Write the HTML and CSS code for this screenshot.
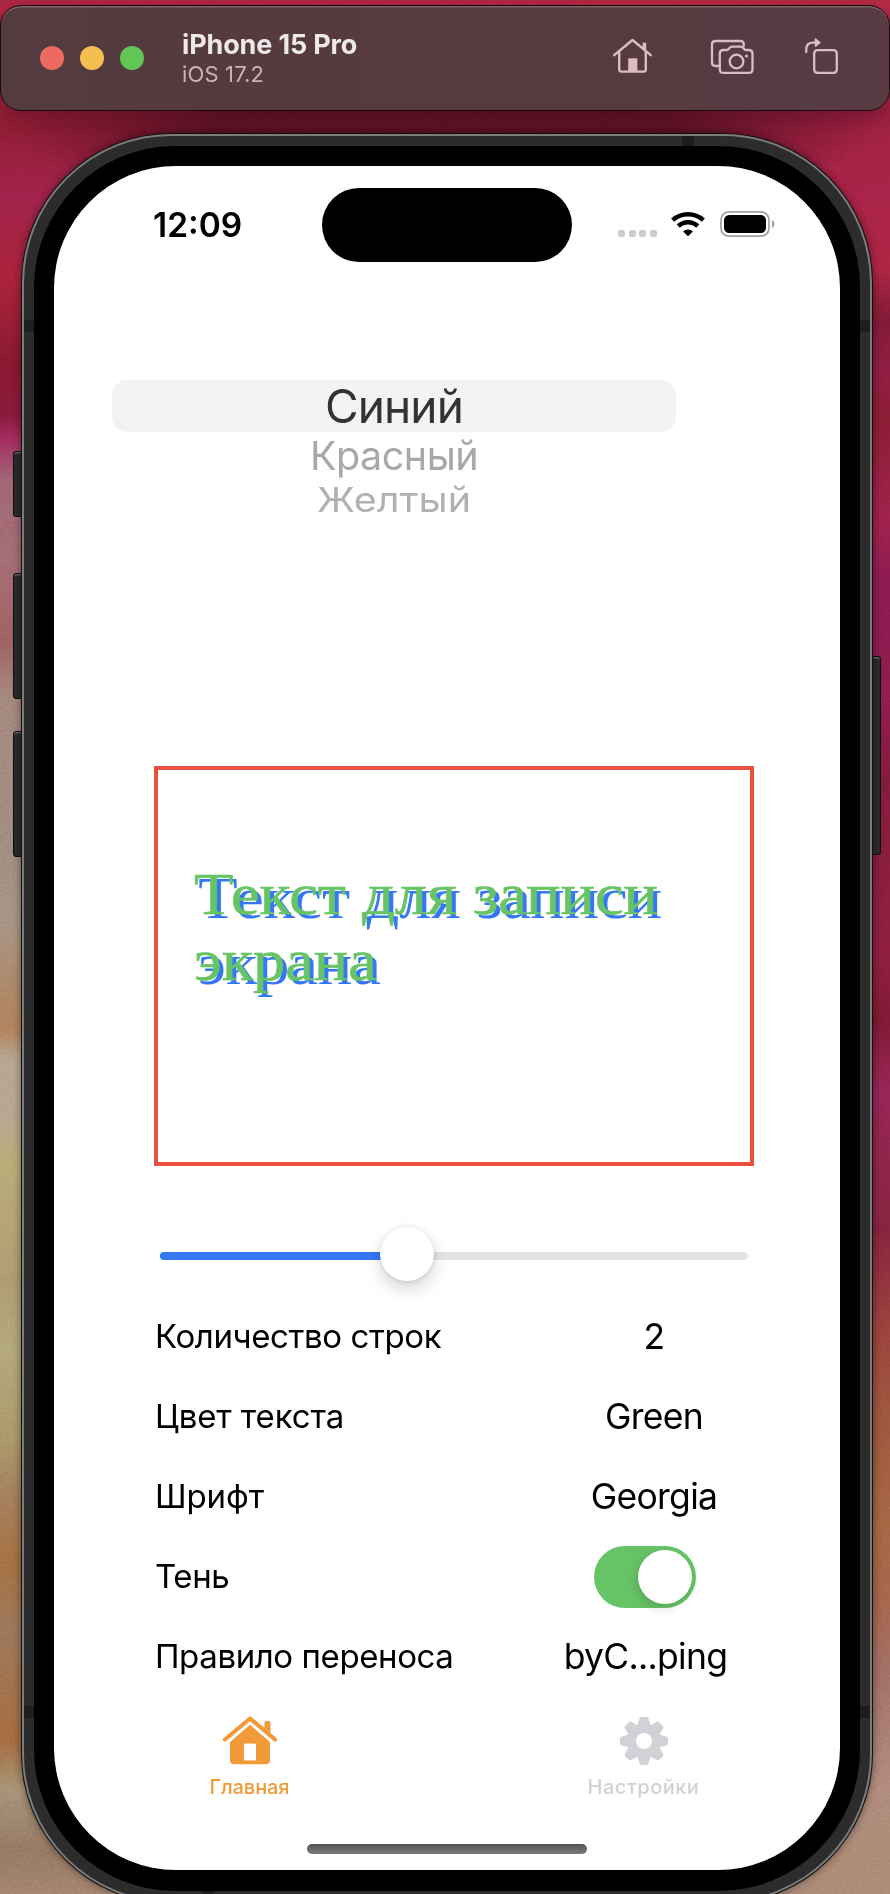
FILE: index.html
```html
<!DOCTYPE html>
<html lang="ru">
<head>
<meta charset="utf-8">
<title>iPhone 15 Pro</title>
<link rel="stylesheet" href="styles.css">
</head>
<body>
<div class="desktop">
  <svg class="grain" width="890" height="1894" aria-hidden="true">
    <filter id="noise"><feTurbulence type="fractalNoise" baseFrequency="0.4" numOctaves="2" seed="4"/><feColorMatrix type="saturate" values="0"/></filter>
    <rect width="890" height="1894" filter="url(#noise)"/>
  </svg>
  <header class="toolbar">
    <div class="lights"><i class="light close"></i><i class="light minimize"></i><i class="light expand"></i></div>
    <div class="titles">
      <div class="title"><span>iPhone 15 Pro</span></div>
      <div class="subtitle"><span>iOS 17.2</span></div>
    </div>
    <div class="tools">
      <svg width="41" height="38" viewBox="0 0 41 38" fill="none" stroke="currentColor" stroke-width="2.4" stroke-linecap="round" stroke-linejoin="round">
        <path d="M2.2 18.2 20.5 3 38.8 18.2"/><path d="M7.2 15v17.2q0 2.4 2.4 2.4h21.8q2.4 0 2.4-2.4V15"/><path d="M32.4 11.5V7.500" stroke-width="3.6" stroke-linecap="square"/><path d="M17 22h7.6v12H17z" fill="currentColor" stroke-width="1.6"/>
      </svg>
      <svg class="camera" width="44" height="38" viewBox="0 0 44 38" fill="none" stroke="currentColor" stroke-width="2.3" stroke-linecap="round" stroke-linejoin="round">
        <path d="M8.5 28H5.5Q2 28 2 24.500V6.500Q2 3 5.500 3h24.800q3.500 0 3.500 3.500v1.400"/>
        <path d="M13.500 12h3.200q1 0 1.700-.8l1.500-1.700q1-.9 2.300-.9h8.400q1.300 0 2.200.9l1.600 1.700q.7.800 1.700.800h2.600q3.800 0 3.800 3.700v15.500q0 3.700-3.800 3.700H13.500q-3.700 0-3.700-3.700V15.700q0-3.700 3.700-3.700z"/>
        <circle cx="26.500" cy="23.500" r="6.800"/><circle cx="36.500" cy="18" r="1.600" fill="currentColor" stroke="none"/>
      </svg>
      <svg width="36" height="40" viewBox="0 0 36 40" fill="none" stroke="currentColor" stroke-width="2.3" stroke-linecap="round" stroke-linejoin="round">
        <rect x="10.200" y="14.200" width="22.600" height="22.600" rx="3.200"/><path d="M2.200 16v-2.500Q2.200 6.600 9.200 6.600h3"/><path d="M11.500 3.200v6.800l4.300-3.400z" fill="currentColor" stroke-width="1.600"/>
      </svg>
    </div>
  </header>

  <div class="phone">
    <i class="side action"></i><i class="side up"></i><i class="side down"></i><i class="side power"></i>
    <div class="rim"><div class="frame">
      <i class="band lt"></i><i class="band rt"></i><i class="band lb"></i><i class="band rb"></i><i class="band tp"></i><i class="band bt"></i>
      <div class="bezel"><main class="screen">
        <div class="status">
          <div class="time"><span>12:09</span></div>
          <div class="island"></div>
          <div class="signals">
            <span class="dots"><i></i><i></i><i></i><i></i></span>
            <svg class="wifi" width="34" height="26" viewBox="0 0 34 26" fill="none" stroke="#000" stroke-width="4.500">
              <path d="M1.600 9.200Q8.200 3.250 17 3.250T32.400 9.200"/><path d="M7.300 15.200Q11.300 11.300 17 11.300T26.700 15.200"/><path d="M17 25.300l-4.900-4.700Q14.200 18.500 17 18.500t4.900 2.100z" fill="#000" stroke="none"/>
            </svg>
            <svg width="56" height="28" viewBox="0 0 56 28">
              <rect x="1" y="1.800" width="48" height="24.400" rx="8" fill="none" stroke="#a0a0a0" stroke-width="1.700"/><rect x="4" y="5" width="42" height="18" rx="5.200"/><path d="M52 10q2.600 1.200 2.600 4T52 18z" fill="#a0a0a0"/>
            </svg>
          </div>
        </div>
        <div class="picker">
          <div class="choice selected"><span>Синий</span></div>
          <div class="choice near"><span>Красный</span></div>
          <div class="choice far"><span>Желтый</span></div>
        </div>
        <section class="preview"><p><span class="l1">Текст для записи</span><br><span class="l2">экрана</span></p></section>
        <div class="slider"><div class="track"><div class="fill"></div></div><div class="thumb"></div></div>
        <div class="rows">
          <div class="row"><div class="name tight"><span>Количество строк</span></div><div class="value"><span>2</span></div></div>
          <div class="row"><div class="name"><span>Цвет текста</span></div><div class="value"><span>Green</span></div></div>
          <div class="row"><div class="name"><span>Шрифт</span></div><div class="value"><span>Georgia</span></div></div>
          <div class="row"><div class="name tight"><span>Тень</span></div><div class="value"><div class="switch"><div class="knob"></div></div></div></div>
          <div class="row"><div class="name tight"><span>Правило переноса</span></div><div class="value rule"><span>byC...ping</span></div></div>
        </div>
        <nav class="tabs">
          <div class="tab active">
            <svg width="56" height="52" viewBox="0 0 56 52" fill="currentColor">
              <path d="M3 24.500 28 3.500 53 24.500" fill="none" stroke="currentColor" stroke-width="4.200" stroke-linecap="round" stroke-linejoin="round"/>
              <path d="M42.500 13V7.500q0-1.500 1.500-1.500h3q1.500 0 1.500 1.500V19z"/>
              <path fill-rule="evenodd" d="M28 9.800 48 27v18q0 4.200-4.200 4.200H12.200Q8 49.200 8 45V27zM23.500 28.500q-1.500 0-1.500 1.500v14q0 1.500 1.500 1.500h9q1.500 0 1.500-1.500V30q0-1.500-1.500-1.500z"/>
            </svg>
            <span>Главная</span>
          </div>
          <div class="tab">
            <svg width="52" height="52" viewBox="-26 -26 52 52" fill="currentColor">
              <defs><path id="tooth" d="M-6.600-15l2-7.300Q-4.200-24-2.400-24h4.800q1.800 0 2.200 1.700l2 7.300z"/></defs>
              <use href="#tooth"/><use href="#tooth" transform="rotate(45)"/><use href="#tooth" transform="rotate(90)"/><use href="#tooth" transform="rotate(135)"/><use href="#tooth" transform="rotate(180)"/><use href="#tooth" transform="rotate(225)"/><use href="#tooth" transform="rotate(270)"/><use href="#tooth" transform="rotate(315)"/>
              <circle r="12.600" fill="none" stroke="currentColor" stroke-width="9.200"/>
            </svg>
            <span>Настройки</span>
          </div>
        </nav>
        <div class="indicator"></div>
      </main></div>
    </div></div>
  </div>
</div>
</body>
</html>
```
FILE: styles.css
```css
* { box-sizing: border-box; }
body { margin: 0; font-family: Inter, "Noto Sans", sans-serif; color: #000; }
.desktop {
  position: relative; width: 890px; height: 1894px; overflow: hidden; padding-top: 5px;
  background:
    radial-gradient(ellipse 50% 50%, #5d1226 0, #5d1226 55%, rgba(93, 18, 38, 0) 100%) 50% 60px / 860px 150px no-repeat,
    linear-gradient(90deg, #a82340, #b02840) 0 0 / 100% 8px no-repeat,
    linear-gradient(180deg, #a92645 0, #9c2040 110px, #a52145 200px, #a82340 270px, #7c1934 320px, #8a1c40 370px, #861b32 420px, #9b2048 520px, #87194d 580px, #8b1b4b 700px, #7c1b3a 780px, #8b1d3c 950px, #7a1832 1020px, #922452 1090px, #81223c 1230px, #97403a 1330px, #99523c 1410px, #a26242 1530px, #a1624c 1610px, #9e6c64 1680px, #ad8577 1780px, #a78570 1894px) 100% 0 / 445px 1894px no-repeat,
    linear-gradient(180deg, #ac233b 0, #a5203a 70px, #8e1c34 130px, #9d2148 200px, #a62136 280px, #84182f 360px, #831837 415px, #a02b5c 440px, #9b6170 480px, #a1686f 560px, #9a5d5e 640px, #a18379 700px, #9c877b 850px, #a3907f 920px, #aa8264 990px, #ae7d5b 1030px, #b3a18a 1060px, #b4a18a 1120px, #b8a873 1160px, #ab976d 1280px, #b0a477 1350px, #a79365 1440px, #9f7b5c 1490px, #a26c3e 1560px, #987257 1630px, #a2683d 1740px, #a38e72 1790px, #91745f 1850px, #a17f6b 1894px);
}
.grain { position: absolute; left: 0; top: 0; opacity: .25; mix-blend-mode: overlay; }

.toolbar {
  position: relative; height: 106px; display: flex; align-items: center; padding: 0 49px 0 39px;
  border: 1px solid #160a0d; border-radius: 21px; color: #dcbcc4;
  background: linear-gradient(90deg, #543b40, #553a3f 50%, #593b43);
  box-shadow: inset 0 1.500px 0 #806267, 0 10px 22px rgba(40, 0, 15, .35);
}
.lights { display: flex; gap: 16px; }
.light { width: 24px; height: 24px; border-radius: 50%; }
.close { background: #ec6a5e; }
.minimize { background: #f4bf50; }
.expand { background: #62c655; }
.titles { margin-left: 38px; white-space: nowrap; }
.title { font-size: 27px; line-height: 32px; font-weight: 700; color: #eee8e9; letter-spacing: -.15px; }
.subtitle { font-size: 22px; line-height: 27px; color: #d0b0b7; letter-spacing: .15px; }
.tools { display: flex; align-items: center; margin-left: auto; height: 42px; margin-bottom: 5px; }
.camera { margin: 2px 50px 0 57px; }

.phone { position: relative; width: 852px; margin: 22px 0 0 21px; height: 1771px; }
.rim { padding: 1px; border-radius: 150px; background: #111; height: 100%; box-shadow: 0 0 9px rgba(0, 0, 0, .45); position: relative; }
.frame { position: relative; height: 100%; padding: 10px; border: 2px solid #7c7c7c; border-radius: 149px; background: #2c2c2c; }
.bezel { position: relative; height: 100%; padding: 20px; border-radius: 141px; background: #000; }
.screen { display: flex; flex-direction: column; height: 1704px; width: 786px; border-radius: 122px; background: #fff; overflow: hidden; }
.side { position: absolute; left: -8px; width: 12px; background: #2c2c2c; border: 1px solid #0c0c0c; border-radius: 3px; box-shadow: inset 0 1.500px 0 #666; }
.action { top: 318px; height: 66px; }
.up { top: 440px; height: 126px; }
.down { top: 598px; height: 126px; }
.power { left: auto; right: -8px; top: 523px; height: 199px; }
.band { position: absolute; width: 10px; height: 12px; background: #1e1e1e; }
.lt, .rt { top: 184px; }
.lb, .rb { top: 1570px; }
.lt, .lb { left: 0; }
.rt, .rb { right: 0; }
.tp, .bt { width: 12px; height: 10px; }
.tp { left: 658px; top: 0; }
.bt { left: 178px; bottom: 0; }

.status { display: flex; height: 214px; padding-top: 22px; }
.time { width: 268px; padding-left: 99px; padding-top: 17px; font-size: 33.500px; line-height: 40px; font-weight: 600; }
.island { width: 250px; height: 74px; border-radius: 37px; background: #000; }
.signals { display: flex; align-items: center; height: 74px; padding-left: 46px; }
.dots { display: flex; gap: 3.700px; padding-top: 17px; }
.dots i { width: 7px; height: 7px; border-radius: 2.200px; background: #ccc; }
.wifi { margin: 0 15px 2px 14px; }
.signals svg:last-child { margin-bottom: 2px; }

.picker { width: 564px; height: 386px; margin-left: 58px; text-align: center; }
.choice span { display: inline-block; white-space: nowrap; }
.selected { height: 52px; border-radius: 15px; background: #f3f3f3; color: #333; font-size: 46px; line-height: 52px; letter-spacing: -.9px; }
.near { height: 48px; line-height: 48px; font-size: 39.500px; color: #a8a8a8; letter-spacing: -.5px; }
.far { height: 44px; line-height: 40px; font-size: 39.500px; color: #b1b1b1; }
.far span { transform: scaleY(.86); }

.preview { width: 600px; height: 400px; margin-left: 100px; padding: 91px 36px 0; border: 4px solid #e9513f; }
.preview p { margin: 0; font: 60px/66px "Liberation Serif", serif; color: #67c466; text-shadow: 4px 4px 0 #3478f6; white-space: nowrap; transform: scaleX(1.074); transform-origin: 0 0; -webkit-text-stroke: .6px #67c466; }

.slider { position: relative; height: 130px; margin: 0 92px 0 106px; padding-top: 86px; }
.track { height: 8px; border-radius: 4px; background: #e4e4e6; overflow: hidden; }
.fill { width: 246px; height: 8px; background: #3478f6; }
.thumb { position: absolute; left: 220px; top: 61px; width: 54px; height: 54px; border-radius: 50%; background: #fff; box-shadow: 0 8px 18px rgba(0, 0, 0, .16), 0 1px 5px rgba(0, 0, 0, .12); }

.rows { margin-left: 100px; }
.row { display: flex; align-items: center; height: 80px; white-space: nowrap; }
.name { width: 400px; padding-left: 1px; font-size: 33px; letter-spacing: -.1px; }
.tight { letter-spacing: -.4px; }
.value { width: 200px; font-size: 35.500px; text-align: center; letter-spacing: -.7px; }
.rule { padding-right: 17px; }
.switch { width: 102px; height: 62px; margin: 2px 0 0 40px; padding: 4px; display: flex; justify-content: flex-end; border-radius: 31px; background: #67c466; }
.knob { width: 54px; height: 54px; border-radius: 50%; background: #fff; box-shadow: -2px 4px 10px rgba(0, 0, 0, .15); }

.tabs { display: flex; height: 148px; padding: 18px 0 0; }
.tab { width: 393px; display: flex; flex-direction: column; align-items: center; color: #d1d1d6; font-size: 20px; line-height: 24px; font-weight: 500; letter-spacing: .5px; gap: 8px; padding-top: 1px; }
.tab svg { display: block; }
.active { padding-right: 2px; color: #f19a37; letter-spacing: -.1px; }
.indicator { width: 280px; height: 10px; margin: 0 0 0 253px; border-radius: 5px; background: linear-gradient(#525252, #7c7c7c); }
```
